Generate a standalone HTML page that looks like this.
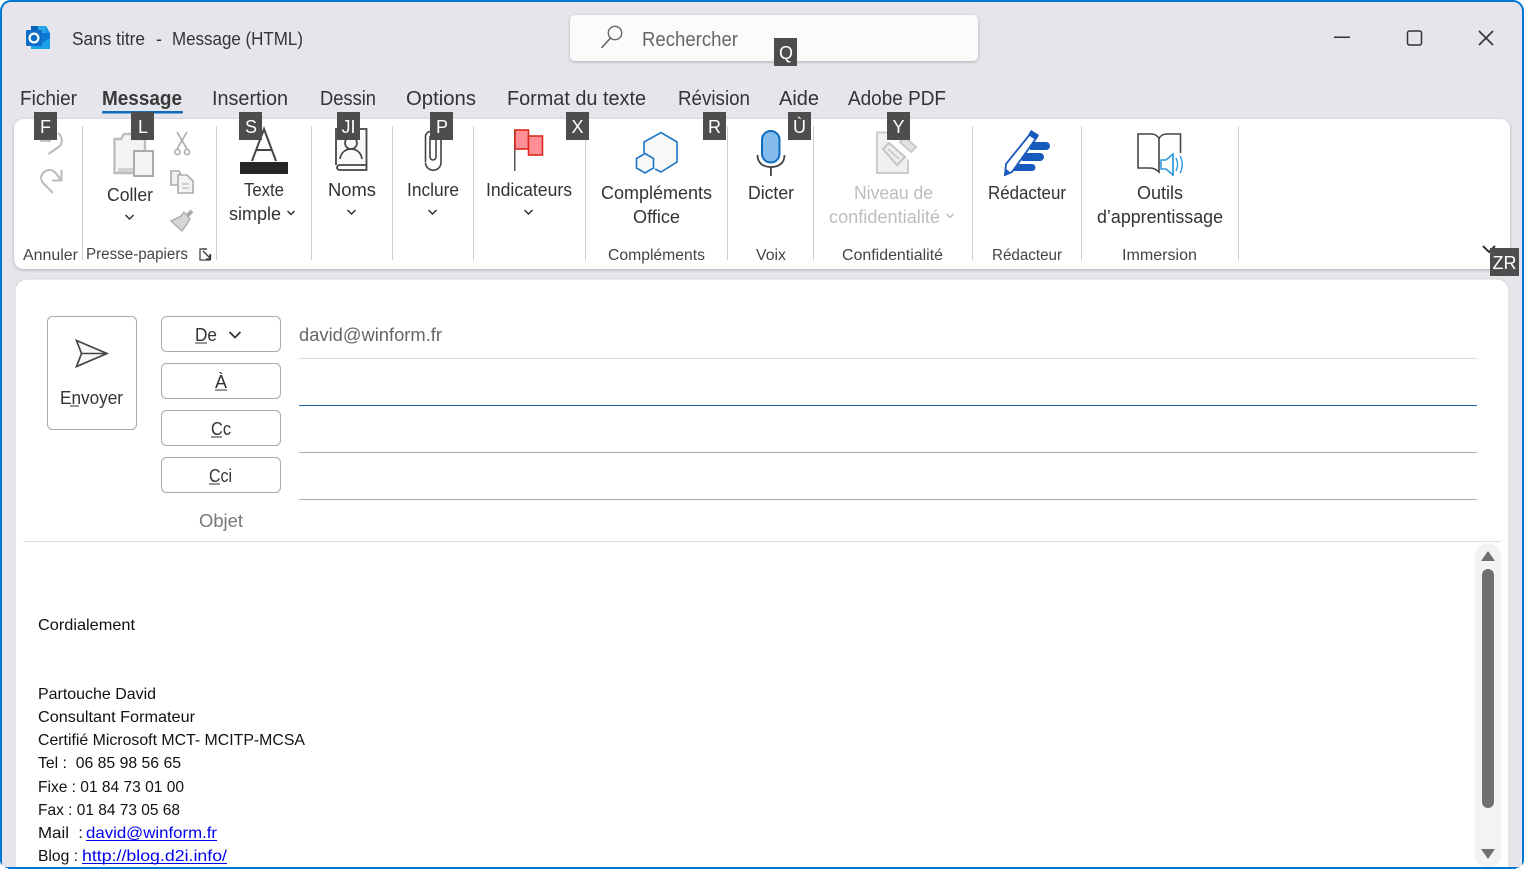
<!DOCTYPE html>
<html lang="fr">
<head>
<meta charset="utf-8">
<title>Sans titre - Message (HTML)</title>
<style>
html,body{margin:0;padding:0;width:1524px;height:869px;overflow:hidden;background:#fff}
svg{display:block}
text{font-family:"Liberation Sans",sans-serif;white-space:pre}
.tab{font-size:20px;fill:#333}
.rb{font-size:18px;fill:#333}
.gr{font-size:15.5px;fill:#444}
.ks{font-size:18px;fill:#fff;text-anchor:middle}
.fm{font-size:18px;fill:#444}
.em{font-size:16px;fill:#111}
.chev{fill:none;stroke:#333;stroke-width:1.5}
</style>
</head>
<body>
<svg width="1524" height="869" viewBox="0 0 1524 869" xmlns="http://www.w3.org/2000/svg">
<defs>
<filter id="sh" x="-5%" y="-20%" width="110%" height="140%"><feDropShadow dx="0" dy="1" stdDeviation="1.6" flood-color="#000" flood-opacity=".25"/></filter>
</defs>
<!-- window -->
<rect x="1" y="1" width="1522" height="880" rx="10" fill="#e6e5ec" stroke="#0078d4" stroke-width="2"/>
<path d="M0 867H1524V869H0Z" fill="#0078d4"/>

<!-- outlook logo -->
<path d="M31 26H46L50 33V49H31Z" fill="#1490df"/>
<path d="M38 26H46V33H38Z" fill="#28a8ea"/>
<path d="M31 26H38V33H31Z" fill="#0364b8"/>
<path d="M38 33H50V40L44 44L38 40Z" fill="#0f78d4"/>
<path d="M31 49V38L41 44L50 38V49Z" fill="#1aa1e8"/>
<rect x="26" y="30" width="16" height="16" rx="1.5" fill="#0f6cc8"/>
<circle cx="34" cy="38" r="4.4" fill="none" stroke="#fff" stroke-width="2.2"/>

<text x="72" y="45" font-size="18" fill="#333" textLength="73" lengthAdjust="spacingAndGlyphs">Sans titre</text>
<text x="156" y="45" font-size="18" fill="#333">-</text>
<text x="172" y="45" font-size="18" fill="#333" textLength="131" lengthAdjust="spacingAndGlyphs">Message (HTML)</text>

<!-- search -->
<rect x="570" y="15" width="408" height="46" rx="5" fill="#fbfbfb" filter="url(#sh)"/>
<circle cx="615" cy="33" r="6.7" fill="none" stroke="#666" stroke-width="1.4"/>
<path d="M610.5 38L601.5 48" stroke="#666" stroke-width="1.6" fill="none"/>
<text x="642" y="46" font-size="20" fill="#666" textLength="96" lengthAdjust="spacingAndGlyphs">Rechercher</text>

<!-- window controls -->
<rect x="1334" y="36.5" width="16" height="1.5" fill="#333"/>
<rect x="1407.5" y="31" width="14" height="14" rx="2" fill="none" stroke="#333" stroke-width="1.5"/>
<path d="M1479 31L1493 45M1493 31L1479 45" stroke="#333" stroke-width="1.6" fill="none"/>

<!-- tabs -->
<text class="tab" x="20" y="105" textLength="57" lengthAdjust="spacingAndGlyphs">Fichier</text>
<text class="tab" x="102" y="105" textLength="80" lengthAdjust="spacingAndGlyphs" font-weight="bold" style="fill:#3a3a3a">Message</text>
<rect x="102" y="111" width="81" height="2.5" rx="1" fill="#0f6cbd"/>
<text class="tab" x="212" y="105" textLength="76" lengthAdjust="spacingAndGlyphs">Insertion</text>
<text class="tab" x="320" y="105" textLength="56" lengthAdjust="spacingAndGlyphs">Dessin</text>
<text class="tab" x="406" y="105" textLength="70" lengthAdjust="spacingAndGlyphs">Options</text>
<text class="tab" x="507" y="105" textLength="139" lengthAdjust="spacingAndGlyphs">Format du texte</text>
<text class="tab" x="678" y="105" textLength="72" lengthAdjust="spacingAndGlyphs">Révision</text>
<text class="tab" x="779" y="105" textLength="40" lengthAdjust="spacingAndGlyphs">Aide</text>
<text class="tab" x="848" y="105" textLength="98" lengthAdjust="spacingAndGlyphs">Adobe PDF</text>

<!-- ribbon -->
<rect x="14" y="119" width="1496" height="150" rx="10" fill="#fff" filter="url(#sh)"/>
<g fill="#cfcfcf">
<rect x="82" y="126" width="1" height="134"/><rect x="216" y="126" width="1" height="134"/>
<rect x="311" y="126" width="1" height="134"/><rect x="392" y="126" width="1" height="134"/>
<rect x="473" y="126" width="1" height="134"/><rect x="585" y="126" width="1" height="134"/>
<rect x="727" y="126" width="1" height="134"/><rect x="813" y="126" width="1" height="134"/>
<rect x="972" y="126" width="1" height="134"/><rect x="1081" y="126" width="1" height="134"/>
<rect x="1238" y="126" width="1" height="134"/>
</g>

<!-- undo / redo -->
<rect x="40" y="140" width="11" height="2" fill="#c4c4c4"/>
<path d="M58 133C62 136 63 142 60 146L48.500 154" fill="none" stroke="#bbb" stroke-width="2"/>
<path d="M53 193L43 183C38 176 44 170 50 170C54 170 58 175 60.500 180" fill="none" stroke="#bbb" stroke-width="2"/>
<path d="M61.500 170V180.500H52" fill="none" stroke="#bbb" stroke-width="2"/>

<!-- paste -->
<path d="M114.500 139H121L124 134H132L135 139H145V173H114.500Z" fill="#f3f3f3" stroke="#bdbdbd" stroke-width="2.400"/>
<path d="M118 168H133V172H118Z" fill="#d2d2d2"/>
<rect x="134" y="151" width="19" height="25" fill="#f3f3f3" stroke="#aaa" stroke-width="2"/>
<path d="M177 132L187 149M187 132L177 149" stroke="#aaa" stroke-width="1.6" fill="none"/>
<circle cx="177.500" cy="152" r="2.6" fill="none" stroke="#aaa" stroke-width="1.5"/>
<circle cx="187" cy="152" r="2.6" fill="none" stroke="#aaa" stroke-width="1.5"/>
<path d="M178 185H171V171H179L181 175" fill="#f2f2f2" stroke="#aaa" stroke-width="1.6"/>
<path d="M178 175H187L193 181V193H178Z" fill="#f4f4f4" stroke="#aaa" stroke-width="1.6"/>
<path d="M182 184H189M182 188H189" stroke="#bbb" stroke-width="1.3"/>
<path d="M186 217L192 211" stroke="#aaa" stroke-width="4"/>
<path d="M171 221L181 216L184 212L190 219L187 224L182 231Z" fill="#d6d6d6" stroke="#aaa" stroke-width="1.300"/>

<!-- text simple -->
<path d="M252 161L264 129L276 161M256 150H272" fill="none" stroke="#444" stroke-width="2"/>
<rect x="240" y="162" width="48" height="12" fill="#262626"/>

<!-- names book -->
<path d="M336 165V129H366.500V170H340C336 170 336 165 340 165H366.500" fill="#fafafa" stroke="#444" stroke-width="1.8"/>
<circle cx="351" cy="143" r="6" fill="none" stroke="#444" stroke-width="1.7"/>
<path d="M340 159C341 152 346 149 351 149C356 149 361 152 362 159" fill="none" stroke="#444" stroke-width="1.7"/>

<!-- paperclip -->
<path d="M425.500 162V136A5.300 5.300 0 0 1 436 136V157A3 3 0 0 1 430 157V136" fill="none" stroke="#444" stroke-width="1.600"/>
<path d="M441 138V162.500A7.750 7.750 0 0 1 425.500 162.500" fill="none" stroke="#444" stroke-width="1.600"/>

<!-- flags -->
<rect x="514" y="130" width="1.500" height="41" fill="#555"/>
<rect x="515" y="130" width="13.500" height="19" fill="#ff8f96" stroke="#d92b20" stroke-width="1.600"/>
<rect x="528.500" y="136" width="14" height="19" fill="#ff8f96" stroke="#d92b20" stroke-width="1.600"/>

<!-- add-ins hexagons -->
<path d="M644 153V142L661 132.500L677 142V162L661 172L655 169" fill="#f8f8f8" stroke="#1b75c4" stroke-width="1.600"/>
<path d="M645 153.500L653.500 158.500V168L645 173L636.500 168V158.500Z" fill="#f8f8f8" stroke="#1b75c4" stroke-width="1.600"/>

<!-- mic -->
<rect x="762" y="131" width="17.500" height="31.500" rx="8.700" fill="#83bcec" stroke="#0f6cbd" stroke-width="2"/>
<path d="M757.500 155C757.500 163 763 167 771 167C779 167 784.500 163 784.500 155" fill="none" stroke="#444" stroke-width="1.800"/>
<rect x="770" y="167" width="1.800" height="9" fill="#444"/>

<!-- sensitivity -->
<rect x="877" y="132.500" width="31" height="40.500" fill="#f0f0f0" stroke="#ccc" stroke-width="2"/>
<path d="M897 130L922 152L911 162L886 140Z" fill="#fff"/>
<path d="M905 137L916 147L911 152L900 142Z" fill="#e2e2e2" stroke="#cacaca" stroke-width="2"/>
<path d="M883 149L889 143L905 157L897 165Z" fill="#eee" stroke="#c4c4c4" stroke-width="2"/>
<path d="M888 149L899 159" stroke="#c4c4c4" stroke-width="1.500" fill="none"/>

<!-- editor -->
<path d="M1030 142H1046A4 4 0 0 1 1046 150H1030ZM1022 153H1040A4 4 0 0 1 1040 161H1022ZM1014 164H1032A3.500 3.500 0 0 1 1032 171H1014Z" fill="#185abd"/>
<path d="M1005 175L1006 164L1031 133L1037 137L1012 172Z" fill="#fff" stroke="#185abd" stroke-width="1.800"/>
<path d="M1031 130L1039 135L1036 140L1028 135Z" fill="#185abd"/>
<path d="M1004 176L1005 168L1011 173Z" fill="#185abd"/>

<!-- learning tools book -->
<path d="M1138 134H1151C1155 134 1158 136 1159 139V172C1157 170 1154 168 1150 168H1138ZM1159 139C1160 136 1163 134 1167 134H1180.500V153" fill="none" stroke="#444" stroke-width="1.600"/>
<path d="M1161 160H1166L1173 154V175L1166 169H1161Z" fill="#fff" stroke="#2e9ade" stroke-width="1.600"/>
<path d="M1176 158C1178 162 1178 167 1176 171M1180 156C1183 161 1183 168 1180 173M1173 155V176" fill="none" stroke="#2e9ade" stroke-width="1.400"/>

<!-- ribbon labels -->
<text class="rb" x="107" y="201" textLength="46" lengthAdjust="spacingAndGlyphs">Coller</text>
<path class="chev" d="M125.500 215L129.500 219L133.500 215"/>
<text class="rb" x="244" y="196" textLength="40" lengthAdjust="spacingAndGlyphs">Texte</text>
<text class="rb" x="229" y="220" textLength="52" lengthAdjust="spacingAndGlyphs">simple</text>
<path class="chev" d="M287.500 211L291 214.500L294.500 211"/>
<text class="rb" x="328" y="196" textLength="48" lengthAdjust="spacingAndGlyphs">Noms</text>
<path class="chev" d="M347.500 210L351.500 214L355.500 210"/>
<text class="rb" x="407" y="196" textLength="52" lengthAdjust="spacingAndGlyphs">Inclure</text>
<path class="chev" d="M428.500 210L432.500 214L436.500 210"/>
<text class="rb" x="486" y="196" textLength="86" lengthAdjust="spacingAndGlyphs">Indicateurs</text>
<path class="chev" d="M524.500 210L528.500 214L532.500 210"/>
<text class="rb" x="601" y="199" textLength="111" lengthAdjust="spacingAndGlyphs">Compléments</text>
<text class="rb" x="633" y="223" textLength="47" lengthAdjust="spacingAndGlyphs">Office</text>
<text class="rb" x="748" y="199" textLength="46" lengthAdjust="spacingAndGlyphs">Dicter</text>
<text class="rb" x="854" y="199" textLength="79" lengthAdjust="spacingAndGlyphs" style="fill:#bdbdbd">Niveau de</text>
<text class="rb" x="829" y="223" textLength="111" lengthAdjust="spacingAndGlyphs" style="fill:#bdbdbd">confidentialité</text>
<path d="M946.500 214L950 217.500L953.500 214" fill="none" stroke="#bdbdbd" stroke-width="1.500"/>
<text class="rb" x="988" y="199" textLength="78" lengthAdjust="spacingAndGlyphs">Rédacteur</text>
<text class="rb" x="1137" y="199" textLength="46" lengthAdjust="spacingAndGlyphs">Outils</text>
<text class="rb" x="1097" y="223" textLength="126" lengthAdjust="spacingAndGlyphs">d’apprentissage</text>

<!-- group labels -->
<text class="gr" x="23" y="260" textLength="55" lengthAdjust="spacingAndGlyphs">Annuler</text>
<text class="gr" x="86" y="259" textLength="102" lengthAdjust="spacingAndGlyphs">Presse-papiers</text>
<path d="M210 254V260H200V249H206" fill="none" stroke="#444" stroke-width="1.300"/>
<path d="M202 249H207M203 251L210 258M206 259H210.500V254" fill="none" stroke="#333" stroke-width="1.300"/>
<text class="gr" x="608" y="260" textLength="97" lengthAdjust="spacingAndGlyphs">Compléments</text>
<text class="gr" x="756" y="260" textLength="30" lengthAdjust="spacingAndGlyphs">Voix</text>
<text class="gr" x="842" y="260" textLength="101" lengthAdjust="spacingAndGlyphs">Confidentialité</text>
<text class="gr" x="992" y="260" textLength="70" lengthAdjust="spacingAndGlyphs">Rédacteur</text>
<text class="gr" x="1122" y="260" textLength="75" lengthAdjust="spacingAndGlyphs">Immersion</text>
<path d="M1483 246L1489 252L1495 246" fill="none" stroke="#333" stroke-width="2"/>

<!-- message body -->
<path d="M15 869V291A12 12 0 0 1 27 279H1497A12 12 0 0 1 1509 291V869Z" fill="#fff" stroke="#d6d6d6"/>

<!-- send -->
<rect x="47.500" y="316.500" width="89" height="113" rx="5" fill="#fff" stroke="#aaa"/>
<path d="M76.500 340.500L107 353.500L76.500 366.500L81.500 353.500Z" fill="#f8f8f8" stroke="#444" stroke-width="1.700" stroke-linejoin="miter"/>
<path d="M81.500 353.500H107" stroke="#444" stroke-width="1.500"/>
<text class="fm" x="60" y="404" textLength="63" lengthAdjust="spacingAndGlyphs" style="fill:#333">Envoyer</text>
<rect x="70" y="405.500" width="9" height="1" fill="#333"/>

<!-- address buttons -->
<g fill="#fff" stroke="#aaa">
<rect x="161.500" y="316.500" width="119" height="35" rx="5"/>
<rect x="161.500" y="363.500" width="119" height="35" rx="5"/>
<rect x="161.500" y="410.500" width="119" height="35" rx="5"/>
<rect x="161.500" y="457.500" width="119" height="35" rx="5"/>
</g>
<text class="fm" x="195" y="341" textLength="22" lengthAdjust="spacingAndGlyphs" style="fill:#333">De</text>
<rect x="195" y="342.500" width="12" height="1" fill="#333"/>
<path d="M229.500 332L235 337.500L240.500 332" fill="none" stroke="#333" stroke-width="1.800"/>
<text class="fm" x="215" y="388" textLength="12" lengthAdjust="spacingAndGlyphs" style="fill:#333">À</text>
<rect x="215" y="389.500" width="12" height="1" fill="#333"/>
<text class="fm" x="211" y="435" textLength="20" lengthAdjust="spacingAndGlyphs" style="fill:#333">Cc</text>
<rect x="211" y="436.500" width="11" height="1" fill="#333"/>
<text class="fm" x="209" y="482" textLength="23" lengthAdjust="spacingAndGlyphs" style="fill:#333">Cci</text>
<rect x="209" y="483.500" width="11" height="1" fill="#333"/>
<text class="fm" x="199" y="527" textLength="44" lengthAdjust="spacingAndGlyphs" style="fill:#777">Objet</text>
<text class="fm" x="299" y="341" textLength="143" lengthAdjust="spacingAndGlyphs" style="fill:#666">david@winform.fr</text>

<rect x="299" y="358" width="1178" height="1" fill="#ddd"/>
<rect x="299" y="405" width="1178" height="1" fill="#1a5f9e"/>
<rect x="299" y="452" width="1178" height="1" fill="#aaa"/>
<rect x="299" y="499" width="1178" height="1" fill="#aaa"/>
<rect x="23" y="541" width="1478" height="1" fill="#ddd"/>

<!-- email body -->
<text class="em" x="38" y="630" textLength="97" lengthAdjust="spacingAndGlyphs">Cordialement</text>
<text class="em" x="38" y="699" textLength="118" lengthAdjust="spacingAndGlyphs">Partouche David</text>
<text class="em" x="38" y="722" textLength="157" lengthAdjust="spacingAndGlyphs">Consultant Formateur</text>
<text class="em" x="38" y="745" textLength="267" lengthAdjust="spacingAndGlyphs">Certifié Microsoft MCT- MCITP-MCSA</text>
<text class="em" x="38" y="768" textLength="143" lengthAdjust="spacingAndGlyphs">Tel :  06 85 98 56 65</text>
<text class="em" x="38" y="792" textLength="146" lengthAdjust="spacingAndGlyphs">Fixe : 01 84 73 01 00</text>
<text class="em" x="38" y="815" textLength="142" lengthAdjust="spacingAndGlyphs">Fax : 01 84 73 05 68</text>
<text class="em" x="38" y="838" textLength="45" lengthAdjust="spacingAndGlyphs">Mail  :</text>
<text class="em" x="86" y="838" textLength="131" lengthAdjust="spacingAndGlyphs" style="fill:#0000ee">david@winform.fr</text>
<rect x="86" y="840" width="131" height="1" fill="#0000ee"/>
<text class="em" x="38" y="861" textLength="40" lengthAdjust="spacingAndGlyphs">Blog :</text>
<text class="em" x="82" y="861" textLength="145" lengthAdjust="spacingAndGlyphs" style="fill:#0000ee">http://blog.d2i.info/</text>
<rect x="82" y="863" width="145" height="1" fill="#0000ee"/>

<!-- scrollbar -->
<rect x="1475" y="543" width="26" height="324" rx="12" fill="#f3f3f3"/>
<rect x="1482" y="569" width="12" height="239" rx="6" fill="#707070"/>
<path d="M1488 551L1495 561H1481Z" fill="#707070"/>
<path d="M1481 849H1495L1488 859Z" fill="#707070"/>

<path d="M0 867H1524V869H0Z" fill="#0078d4"/>
<path d="M0 0H8A8 8 0 0 0 1 8V0ZM1524 0H1516A8 8 0 0 1 1523 8V0ZM0 869V860A8 8 0 0 0 8 868V869ZM1524 869V860A8 8 0 0 1 1516 868V869Z" fill="#fff"/>

<!-- key tips -->
<g fill="#4d4d4d">
<rect x="774" y="38" width="23" height="28"/>
<rect x="34" y="112" width="23" height="28"/><rect x="131" y="112" width="23" height="28"/>
<rect x="239" y="112" width="23" height="28"/><rect x="337" y="112" width="23" height="28"/>
<rect x="430" y="112" width="23" height="28"/><rect x="566" y="112" width="23" height="28"/>
<rect x="703" y="112" width="23" height="28"/><rect x="788" y="112" width="23" height="28"/>
<rect x="887" y="112" width="23" height="28"/><rect x="1490" y="248" width="29" height="28"/>
</g>
<text class="ks" x="786" y="59">Q</text>
<text class="ks" x="45.500" y="133">F</text>
<text class="ks" x="143" y="133">L</text>
<text class="ks" x="251" y="133">S</text>
<text class="ks" x="348.500" y="133">JI</text>
<text class="ks" x="442" y="133">P</text>
<text class="ks" x="577.500" y="133">X</text>
<text class="ks" x="714.500" y="133">R</text>
<text class="ks" x="799.500" y="133">Ù</text>
<text class="ks" x="898.500" y="133">Y</text>
<text class="ks" x="1504.500" y="269">ZR</text>
</svg>
</body>
</html>
